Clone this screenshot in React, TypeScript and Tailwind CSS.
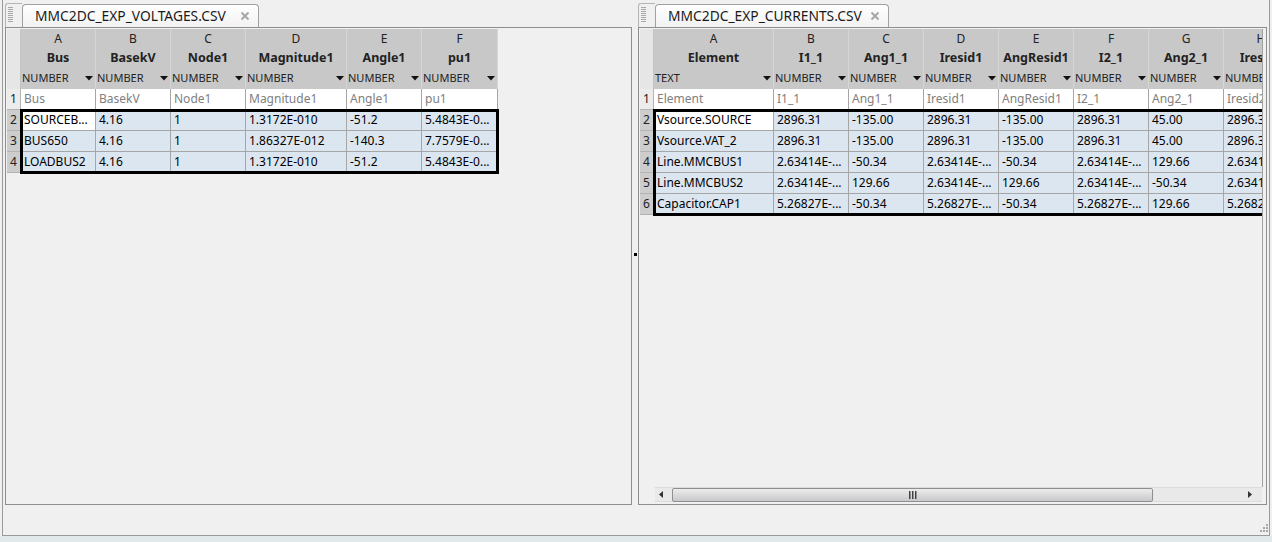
import React from "react";

type Col = { l: string; n: string; t: string; w: string; r1: string };

const leftCols: Col[] = [
  { l: "A", n: "Bus", t: "NUMBER", w: "w-[75px]", r1: "Bus" },
  { l: "B", n: "BasekV", t: "NUMBER", w: "w-[75px]", r1: "BasekV" },
  { l: "C", n: "Node1", t: "NUMBER", w: "w-[75px]", r1: "Node1" },
  { l: "D", n: "Magnitude1", t: "NUMBER", w: "w-[101px]", r1: "Magnitude1" },
  { l: "E", n: "Angle1", t: "NUMBER", w: "w-[75px]", r1: "Angle1" },
  { l: "F", n: "pu1", t: "NUMBER", w: "w-[76px]", r1: "pu1" },
];

const leftRows = [
  ["SOURCEB...", "4.16", "1", "1.3172E-010", "-51.2", "5.4843E-0..."],
  ["BUS650", "4.16", "1", "1.86327E-012", "-140.3", "7.7579E-0..."],
  ["LOADBUS2", "4.16", "1", "1.3172E-010", "-51.2", "5.4843E-0..."],
];

const rightCols: Col[] = [
  { l: "A", n: "Element", t: "TEXT", w: "w-[120px]", r1: "Element" },
  { l: "B", n: "I1_1", t: "NUMBER", w: "w-[75px]", r1: "I1_1" },
  { l: "C", n: "Ang1_1", t: "NUMBER", w: "w-[75px]", r1: "Ang1_1" },
  { l: "D", n: "Iresid1", t: "NUMBER", w: "w-[75px]", r1: "Iresid1" },
  { l: "E", n: "AngResid1", t: "NUMBER", w: "w-[75px]", r1: "AngResid1" },
  { l: "F", n: "I2_1", t: "NUMBER", w: "w-[75px]", r1: "I2_1" },
  { l: "G", n: "Ang2_1", t: "NUMBER", w: "w-[75px]", r1: "Ang2_1" },
  { l: "H", n: "Iresid2", t: "NUMBER", w: "w-[75px]", r1: "Iresid2" },
];

const rightRows = [
  ["Vsource.SOURCE", "2896.31", "-135.00", "2896.31", "-135.00", "2896.31", "45.00", "2896.31"],
  ["Vsource.VAT_2", "2896.31", "-135.00", "2896.31", "-135.00", "2896.31", "45.00", "2896.31"],
  ["Line.MMCBUS1", "2.63414E-...", "-50.34", "2.63414E-...", "-50.34", "2.63414E-...", "129.66", "2.63414E-..."],
  ["Line.MMCBUS2", "2.63414E-...", "129.66", "2.63414E-...", "129.66", "2.63414E-...", "-50.34", "2.63414E-..."],
  ["Capacitor.CAP1", "5.26827E-...", "-50.34", "5.26827E-...", "-50.34", "5.26827E-...", "129.66", "5.26827E-..."],
];

const cell =
  "shrink-0 h-[21px] border-r border-b border-[#a6a6a6] pl-[3px] text-[12px] leading-[20px] whitespace-nowrap overflow-hidden";
const rowNum =
  "h-[21px] border-b border-r border-[#b4b4b4] text-[12px] leading-[20px] text-center text-[#222]";

function Tri() {
  return (
    <svg width="8" height="5" viewBox="0 0 8 5" className="shrink-0">
      <polygon points="0,0 8,0 4,4.5" fill="#111" />
    </svg>
  );
}

function Table({ cols, rows }: { cols: Col[]; rows: string[][] }) {
  return (
    <div className="flex">
      <div className="w-[14px] shrink-0 flex flex-col">
        <div className="h-[60px] bg-[#e6e6e6] border-r border-[#c4c4c4]" />
        <div className={rowNum + " bg-[#ececec]"}>1</div>
        {rows.map((_, i) => (
          <div key={i} className={rowNum + " bg-[#cdcdcd]"}>
            {i + 2}
          </div>
        ))}
      </div>
      <div className="flex flex-col">
        <div className="flex h-[60px] bg-[#c8c8c8]">
          {cols.map((c) => (
            <div key={c.l} className={`${c.w} shrink-0 flex flex-col border-r border-[#d6d6d6]`}>
              <div className="h-[19px] pt-[1px] leading-[18px] text-center text-[12px] text-[#222]">{c.l}</div>
              <div className="h-[20px] leading-[20px] text-center text-[12.5px] font-bold text-[#222] whitespace-nowrap">
                {c.n}
              </div>
              <div className="h-[21px] flex items-center justify-between pl-[1px] pr-[2px] text-[11px] text-[#222]">
                <span>{c.t}</span>
                <Tri />
              </div>
            </div>
          ))}
        </div>
        <div className="flex">
          {cols.map((c) => (
            <div key={c.l} className={`${c.w} ${cell} bg-white text-[#808080]`}>
              {c.r1}
            </div>
          ))}
        </div>
        <div className="relative outline-[3px] outline-solid outline-black outline-offset-[-2px]">
          {rows.map((r, i) => (
            <div key={i} className="flex">
              {r.map((v, j) => (
                <div
                  key={j}
                  className={`${cols[j].w} ${cell} ${i === 0 && j === 0 ? "bg-white" : "bg-[#dce6f1]"}`}
                >
                  {v}
                </div>
              ))}
            </div>
          ))}
        </div>
      </div>
    </div>
  );
}

function Grip() {
  return (
    <div className="w-[17px] h-[24px] border-t border-l border-[#b4b4b4] rounded-tl-[3px] pl-[2px] pt-[3px] self-end">
      <svg width="6" height="16" viewBox="0 0 6 16">
        {[0, 2, 4, 6, 8, 10, 12, 14].map((y) => (
          <rect key={y} x="0" y={y} width="5" height="1" fill="#a8a8a8" />
        ))}
      </svg>
    </div>
  );
}

function Tab({ title, w }: { title: string; w: string }) {
  return (
    <div
      className={`${w} h-[23px] flex items-center justify-between pl-[12px] pr-[8px] border border-b-0 border-[#a0a0a0] rounded-t-[4px] bg-gradient-to-b from-white to-[#f2f2f2]`}
    >
      <span className="text-[13.8px] text-[#1a1a1a] whitespace-nowrap">{title}</span>
      <svg width="10" height="10" viewBox="0 0 10 10">
        <path d="M1.5 1.5 L8.5 8.5 M8.5 1.5 L1.5 8.5" stroke="#a4a4a4" strokeWidth="1.8" />
      </svg>
    </div>
  );
}

function HScroll() {
  return (
    <div className="ml-[15px] w-[607px] h-[15px] mb-[1px] flex items-center bg-[#e9e9e9] border-y border-[#dcdcdc]">
      <div className="w-[17px] h-full flex items-center pl-[4px]">
        <svg width="4" height="7" viewBox="0 0 4 7">
          <polygon points="4,0 4,7 0,3.5" fill="#333" />
        </svg>
      </div>
      <div className="w-[481px] h-[14px] rounded-[2px] border border-[#8f8f8f] bg-gradient-to-b from-[#ececec] to-[#c9c9cd] flex items-center justify-center">
        <svg width="8" height="8" viewBox="0 0 8 8">
          <rect x="0" y="0" width="1.5" height="8" fill="#444" />
          <rect x="3" y="0" width="1.5" height="8" fill="#444" />
          <rect x="6" y="0" width="1.5" height="8" fill="#444" />
        </svg>
      </div>
      <div className="flex-1" />
      <div className="w-[14px] h-full flex items-center">
        <svg width="4" height="7" viewBox="0 0 4 7">
          <polygon points="0,0 0,7 4,3.5" fill="#333" />
        </svg>
      </div>
    </div>
  );
}

export default function App() {
  return (
    <div className="w-[1272px] h-[542px] bg-[#f0f0f0] overflow-hidden font-['Noto_Sans',sans-serif] text-black">
      <div className="relative ml-[2px] w-[1268px] h-[536px] border-x border-b border-[#9a9a9a]">
        <div className="flex h-[505px] px-[2px]">
          {/* left panel */}
          <div className="w-[627px] flex flex-col">
            <div className="h-[27px] flex items-end">
              <Grip />
              <Tab title="MMC2DC_EXP_VOLTAGES.CSV" w="w-[237px]" />
            </div>
            <div className="flex-1 border border-[#8e8e8e] p-[1px] overflow-hidden">
              <Table cols={leftCols} rows={leftRows} />
            </div>
          </div>

          {/* splitter */}
          <div className="w-[6px] flex flex-col items-center pt-[253px]">
            <div className="w-[3px] h-[3px] bg-black" />
          </div>

          {/* right panel */}
          <div className="flex-1 flex flex-col">
            <div className="h-[27px] flex items-end">
              <Grip />
              <Tab title="MMC2DC_EXP_CURRENTS.CSV" w="w-[234px]" />
            </div>
            <div className="flex-1 border border-[#8e8e8e] p-[1px] flex flex-col">
              <div className="w-[623px] flex-1 overflow-hidden border-r border-[#a0a0a0]">
                <Table cols={rightCols} rows={rightRows} />
              </div>
              <HScroll />
            </div>
          </div>
        </div>

        {/* resize grip */}
        <div className="absolute right-[1px] bottom-[2px]">
          <svg width="10" height="10" viewBox="0 0 10 10">
            {[
              [8, 0],
              [5, 3],
              [8, 3],
              [2, 6],
              [5, 6],
              [8, 6],
            ].map(([x, y], i) => (
              <rect key={i} x={x} y={y + 1} width="2" height="2" fill="#a8a8a8" />
            ))}
          </svg>
        </div>
      </div>
      <div className="h-[6px] bg-[#e1e9eb]" />
    </div>
  );
}
